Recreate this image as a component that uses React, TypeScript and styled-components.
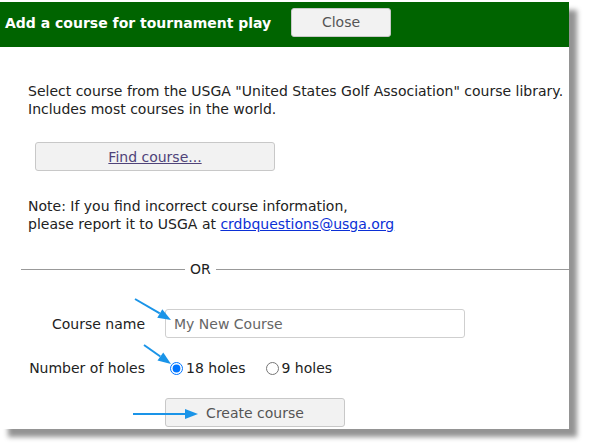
import React from "react";
import styled, { createGlobalStyle } from "styled-components";

const GlobalStyle = createGlobalStyle`
  html, body {
    margin: 0;
    padding: 0;
    background: #ffffff;
  }
  body {
    font-family: "DejaVu Sans", Verdana, sans-serif;
    font-size: 14px;
    color: #222;
  }
`;

const Page = styled.div`
  position: relative;
  width: 589px;
  height: 448px;
  padding-top: 2px;
  box-sizing: border-box;
`;

const Dialog = styled.div`
  width: 569px;
  height: 427px;
  background: #fff;
  box-shadow: 8px 8px 5px #949494;
  display: flex;
  flex-direction: column;
`;

const Header = styled.div`
  height: 45px;
  background: #006400;
  display: flex;
  align-items: center;
  padding-left: 5px;
`;

const Title = styled.div`
  color: #fff;
  font-weight: bold;
  font-size: 14px;
  width: 286px;
  margin-top: -3px;
`;

const Button = styled.button<{ $w: number }>`
  width: ${(p) => p.$w}px;
  height: 29px;
  box-sizing: border-box;
  background: #f2f2f2;
  border: 1px solid #c8c8c8;
  border-radius: 3px;
  font-family: "DejaVu Sans", Verdana, sans-serif;
  font-size: 14px;
  color: #555;
  padding: 0;
  cursor: pointer;
`;

const CloseButton = styled(Button)`
  margin-top: -5px;
`;

const LinkLabel = styled.span`
  color: #4f4379;
  text-decoration: underline;
`;

const Body = styled.div`
  display: flex;
  flex-direction: column;
  padding-top: 35px;
`;

const Text = styled.p`
  margin: 0 0 0 28px;
  line-height: 18px;
`;

const MailLink = styled.a`
  color: #0b2fd6;
  text-decoration: underline;
`;

const FindRow = styled.div`
  margin: 24px 0 26px 35px;
`;

const Divider = styled.div`
  display: flex;
  align-items: center;
  gap: 5px;
  margin: 27px 0 0 21px;
  line-height: 18px;
  &::before,
  &::after {
    content: "";
    height: 1px;
    background: #999;
  }
  &::before {
    width: 164px;
  }
  &::after {
    flex: 1;
  }
`;

const Form = styled.div`
  display: grid;
  grid-template-columns: 145px 1fr;
  grid-template-rows: 29px 60px 29px;
  column-gap: 20px;
  align-items: center;
  margin-top: 31px;
`;

const Label = styled.div`
  text-align: right;
  line-height: 18px;
`;

const Input = styled.input`
  width: 300px;
  height: 29px;
  box-sizing: border-box;
  border: 1px solid #cfcfcf;
  border-radius: 3px;
  padding: 0 8px;
  font-family: "DejaVu Sans", Verdana, sans-serif;
  font-size: 14px;
  color: #555;
  &::placeholder {
    color: #666;
  }
`;

const Radios = styled.div`
  display: flex;
  align-items: center;
`;

const RadioLabel = styled.label`
  display: flex;
  align-items: center;
  margin-right: 15px;
  line-height: 18px;
  input {
    width: 13px;
    height: 13px;
    margin: 0 3px 0 5px;
    accent-color: #0075ff;
  }
`;

const Spacer = styled.div``;

const Arrows = styled.svg`
  position: absolute;
  left: 0;
  top: 0;
  pointer-events: none;
`;

const Arrow = ({ x1, y1, x2, y2 }: { x1: number; y1: number; x2: number; y2: number }) => {
  const a = Math.atan2(y2 - y1, x2 - x1);
  const len = 13;
  const half = 5;
  const bx = x2 - len * Math.cos(a);
  const by = y2 - len * Math.sin(a);
  const px = -Math.sin(a) * half;
  const py = Math.cos(a) * half;
  return (
    <g>
      <line x1={x1} y1={y1} x2={bx} y2={by} stroke="#1a94e8" strokeWidth={2} />
      <polygon
        points={`${x2},${y2} ${bx + px},${by + py} ${bx - px},${by - py}`}
        fill="#1a94e8"
      />
    </g>
  );
};

export default function App() {
  return (
    <>
      <GlobalStyle />
      <Page>
        <Dialog>
          <Header>
            <Title>Add a course for tournament play</Title>
            <CloseButton $w={100}>Close</CloseButton>
          </Header>
          <Body>
            <Text>
              Select course from the USGA "United States Golf Association" course library.
              <br />
              Includes most courses in the world.
            </Text>
            <FindRow>
              <Button $w={240}>
                <LinkLabel>Find course...</LinkLabel>
              </Button>
            </FindRow>
            <Text>
              Note: If you find incorrect course information,
              <br />
              please report it to USGA at{" "}
              <MailLink href="mailto:crdbquestions@usga.org">crdbquestions@usga.org</MailLink>
            </Text>
            <Divider>OR</Divider>
            <Form>
              <Label>Course name</Label>
              <Input placeholder="My New Course" />
              <Label>Number of holes</Label>
              <Radios>
                <RadioLabel>
                  <input type="radio" name="holes" defaultChecked />
                  18 holes
                </RadioLabel>
                <RadioLabel>
                  <input type="radio" name="holes" />
                  9 holes
                </RadioLabel>
              </Radios>
              <Spacer />
              <div>
                <Button $w={180}>Create course</Button>
              </div>
            </Form>
          </Body>
        </Dialog>
        <Arrows width="589" height="448">
          <Arrow x1={135} y1={299} x2={171} y2={320} />
          <Arrow x1={144} y1={345} x2={171} y2={364} />
          <Arrow x1={133} y1={414} x2={198} y2={414} />
        </Arrows>
      </Page>
    </>
  );
}
